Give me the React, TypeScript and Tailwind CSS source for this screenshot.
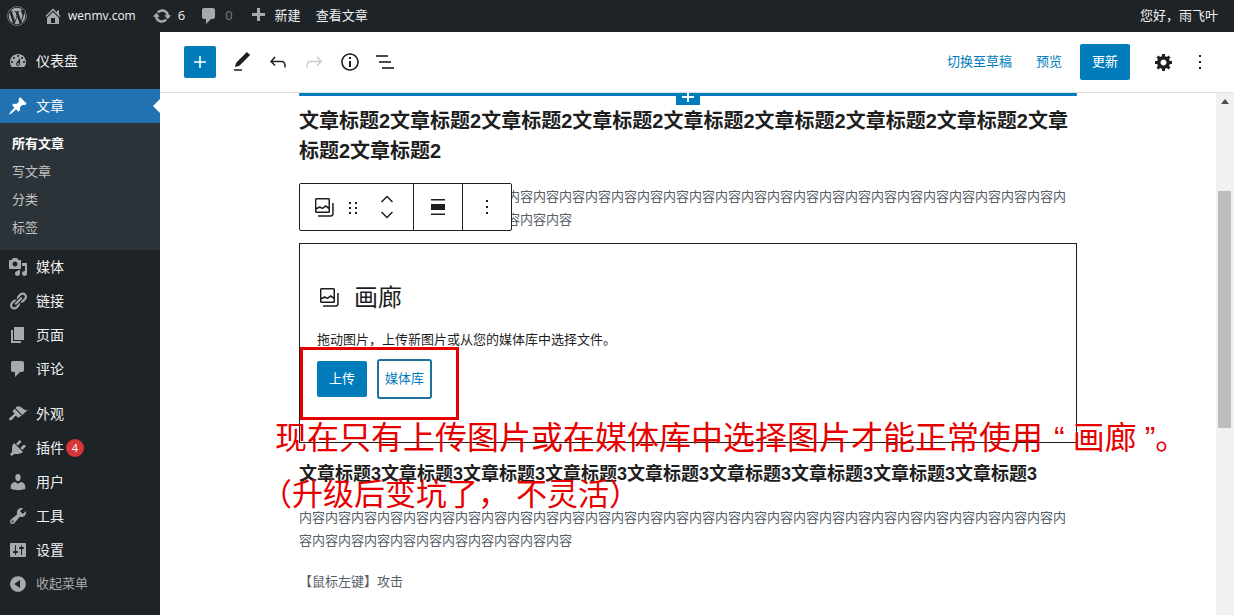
import { FaWordpress } from 'react-icons/fa';

const dash: Record<string, string> = {
  dashboard: 'M3.76 16h12.48c1.1-1.37 1.76-3.11 1.76-5 0-4.42-3.58-8-8-8s-8 3.58-8 8c0 1.89.66 3.63 1.76 5zM10 4c.55 0 1 .45 1 1s-.45 1-1 1-1-.45-1-1 .45-1 1-1zM6 6c.55 0 1 .45 1 1s-.45 1-1 1-1-.45-1-1 .45-1 1-1zm8 0c.55 0 1 .45 1 1s-.45 1-1 1-1-.45-1-1 .45-1 1-1zm-5.37 5.55L12 7v6c0 1.1-.9 2-2 2s-2-.9-2-2c0-.57.24-1.08.63-1.45zM4 10c.55 0 1 .45 1 1s-.45 1-1 1-1-.45-1-1 .45-1 1-1zm12 0c.55 0 1 .45 1 1s-.45 1-1 1-1-.45-1-1 .45-1 1-1zm-5 3c0-.55-.45-1-1-1s-1 .45-1 1 .45 1 1 1 1-.45 1-1z',
  post: 'M10.44 3.02l1.82-1.82 6.36 6.35-1.83 1.82c-1.05-.68-2.48-.57-3.41.36l-.75.75c-.92.93-1.04 2.35-.35 3.41l-1.83 1.82-2.41-2.41-2.8 2.79c-.42.42-3.38 2.71-3.8 2.29s1.86-3.39 2.28-3.81l2.79-2.79L4.1 9.36l1.83-1.82c1.05.69 2.48.57 3.4-.36l.75-.75c.93-.92 1.05-2.35.36-3.41z',
  media: 'M13 11V4c0-.55-.45-1-1-1h-1.67L9 1H5L3.67 3H2c-.55 0-1 .45-1 1v7c0 .55.45 1 1 1h10c.55 0 1-.45 1-1zM7 4.5c1.38 0 2.5 1.12 2.5 2.5S8.38 9.5 7 9.5 4.5 8.38 4.5 7 5.62 4.5 7 4.5zM14 6h5v10.5c0 1.38-1.12 2.5-2.5 2.5S14 17.88 14 16.5s1.12-2.5 2.5-2.5c.17 0 .34.02.5.05V9h-3V6zm-4 8.05V13h2v3.5c0 1.38-1.12 2.5-2.5 2.5S7 17.88 7 16.5 8.12 14 9.5 14c.17 0 .34.02.5.05z',
  links: 'M17.74 2.76c1.68 1.69 1.68 4.41 0 6.1l-1.53 1.52c-1.12 1.12-2.7 1.47-4.14 1.09l2.62-2.61.76-.77.76-.76c.84-.84.84-2.2 0-3.04-.84-.85-2.2-.85-3.04 0l-.77.76-3.38 3.38c-.37-1.44-.02-3.02 1.1-4.14l1.52-1.53c1.69-1.68 4.42-1.68 6.1 0zM8.59 13.43l5.34-5.34c.42-.42.42-1.1 0-1.52-.44-.43-1.13-.39-1.53 0l-5.33 5.34c-.42.42-.42 1.1 0 1.52.44.43 1.13.39 1.52 0zm-.76 2.29l4.14-4.15c.38 1.44.03 3.02-1.09 4.14l-1.52 1.53c-1.69 1.68-4.41 1.68-6.1 0-1.68-1.68-1.68-4.42 0-6.1l1.53-1.52c1.12-1.12 2.7-1.47 4.14-1.1l-4.14 4.15c-.85.84-.85 2.2 0 3.05.84.84 2.2.84 3.04 0z',
  page: 'M6 15V2h10v13H6zm-1 1h8v2H3V5h2v11z',
  comment: 'M5 2h9c1.1 0 2 .9 2 2v7c0 1.1-.9 2-2 2h-2l-5 5v-5H5c-1.1 0-2-.9-2-2V4c0-1.1.9-2 2-2z',
  appearance: 'M14.48 11.06L7.41 3.99l1.5-1.5c.5-.56 2.3-.47 3.51.32 1.21.8 1.43 1.28 2.91 2.1 1.18.64 2.45 1.26 4.45.85zm-.71.71L6.7 4.7 4.93 6.47c-.39.39-.39 1.02 0 1.41l1.06 1.06c.39.39.39 1.03 0 1.42-.6.6-1.43 1.11-2.21 1.69-.35.26-.7.53-1.01.84C1.43 13.23.4 14.96 1.4 15.9c.94 1 2.68-.02 3.03-.37.31-.31.58-.66.85-1.02.57-.78 1.08-1.6 1.69-2.21.39-.39 1.02-.39 1.41 0l1.06 1.06c.39.39 1.02.39 1.41 0z',
  plugins: 'M13.11 4.36L9.87 7.6 8 5.73l3.24-3.24c.35-.34 1.05-.2 1.56.32.52.51.66 1.21.31 1.55zm-8 1.77l.91-1.12 9.01 9.01-1.19.84c-.71.71-2.63 1.16-3.82 1.16H6.14L4.9 17.26c-.59.59-1.54.59-2.12 0-.59-.58-.59-1.53 0-2.12l1.24-1.24v-3.88c0-1.13.4-3.19 1.09-3.89zm7.26 3.97l3.24-3.24c.34-.35 1.04-.21 1.55.31.52.51.66 1.21.31 1.55l-3.24 3.25z',
  users: 'M10 9.25c-2.27 0-2.73-3.44-2.73-3.44C7 4.02 7.82 2 9.97 2c2.16 0 2.98 2.02 2.71 3.81 0 0-.41 3.44-2.68 3.44zm0 2.57L12.72 10c2.39 0 4.52 2.33 4.52 4.53v2.49s-3.65 1.13-7.24 1.13c-3.65 0-7.24-1.13-7.24-1.13v-2.49c0-2.25 1.94-4.48 4.47-4.48z',
  tools: 'M16.68 9.77c-1.34 1.34-3.3 1.67-4.95.99l-5.41 6.52c-.99.99-2.59.99-3.58 0s-.99-2.59 0-3.57l6.52-5.42c-.68-1.65-.35-3.61.99-4.95 1.28-1.28 3.12-1.62 4.72-1.06l-2.89 2.89 2.82 2.82 2.86-2.87c.53 1.58.18 3.39-1.08 4.65zM3.81 16.21c.4.39 1.04.39 1.43 0 .4-.4.4-1.04 0-1.43-.39-.4-1.03-.4-1.43 0-.39.39-.39 1.03 0 1.43z',
  settings: 'M18 16V4c0-.55-.45-1-1-1H3c-.55 0-1 .45-1 1v12c0 .55.45 1 1 1h14c.55 0 1-.45 1-1zM8 11h1c.55 0 1 .45 1 1s-.45 1-1 1H8v1.5c0 .28-.22.5-.5.5s-.5-.22-.5-.5V13H6c-.55 0-1-.45-1-1s.45-1 1-1h1V5.5c0-.28.22-.5.5-.5s.5.22.5.5V11zm5-2h-1c-.55 0-1-.45-1-1s.45-1 1-1h1V5.5c0-.28.22-.5.5-.5s.5.22.5.5V7h1c.55 0 1 .45 1 1s-.45 1-1 1h-1v5.5c0 .28-.22.5-.5.5s-.5-.22-.5-.5V9z',
  collapse: 'M10 2.16c4.33 0 7.84 3.51 7.84 7.84s-3.51 7.84-7.84 7.84S2.16 14.33 2.16 10 5.71 2.16 10 2.16zm2 11.72V6.12L6.18 9.97z',
  update: 'M10.2 3.28c3.53 0 6.43 2.61 6.92 6h2.08l-3.5 4-3.5-4h2.32c-.45-1.97-2.21-3.45-4.32-3.45-1.45 0-2.73.71-3.54 1.78L4.95 5.66C6.23 4.2 8.11 3.28 10.2 3.28zm-.4 13.44c-3.52 0-6.43-2.61-6.92-6H.8l3.5-4c1.17 1.33 2.33 2.67 3.5 4H5.48c.45 1.97 2.21 3.45 4.32 3.45 1.45 0 2.73-.71 3.54-1.78l1.71 1.95c-1.28 1.46-3.15 2.38-5.25 2.38z',
  home: 'M16 8.5l1.53 1.53-1.06 1.06L10 4.62l-6.47 6.47-1.06-1.06L10 2.5l4 4v-2h2v4zm-6-2.46l6 5.99V18H4v-5.97zM12 17v-5H8v5h4z',
  plus: 'M17 7v3h-5v5H9v-5H4V7h5V2h3v5h5z',
  cog: 'M18 12h-2.18c-.17.7-.44 1.35-.81 1.93l1.54 1.54-2.1 2.1-1.54-1.54c-.58.36-1.23.63-1.91.79V19H8v-2.18c-.68-.16-1.33-.43-1.91-.79l-1.54 1.54-2.12-2.12 1.54-1.54c-.36-.58-.63-1.23-.79-1.91H1V9.03h2.17c.16-.7.44-1.35.8-1.94L2.43 5.55l2.1-2.1 1.54 1.54c.58-.37 1.24-.64 1.93-.81V2h3v2.18c.68.16 1.33.43 1.91.79l1.54-1.54 2.12 2.12-1.54 1.54c.36.59.64 1.24.8 1.94H18V12zm-8.5 1.5c1.66 0 3-1.34 3-3s-1.34-3-3-3-3 1.34-3 3 1.34 3 3 3z',
};

const wp: Record<string, string> = {
  add: 'M18 11.2h-5.2V6h-1.6v5.2H6v1.6h5.2V18h1.6v-5.2H18z',
  edit: 'M20.1 5.1L16.9 2 6.2 12.7l-1.3 4.4 4.5-1.3L20.1 5.1zM4 20.8h8v-1.5H4v1.5z',
  undo: 'M18.3 11.7c-.6-.6-1.4-.9-2.3-.9H6.7l2.9-3.3-1.1-1-4.5 5L8.5 16l1-1-2.7-2.7H16c.5 0 .9.2 1.3.5 1 1 1 3.4 1 4.5v.3h1.5v-.2c0-1.5 0-4.3-1.5-5.7z',
  redo: 'M15.6 6.5l-1.1 1 2.9 3.3H8c-.9 0-1.7.3-2.3.9-1.4 1.5-1.4 4.2-1.4 5.6v.2h1.5v-.3c0-1.1 0-3.5 1-4.5.3-.3.7-.5 1.3-.5h9.2L14.5 15l1.1 1.1 4.6-4.6-4.6-5z',
  info: 'M12 3.2c-4.8 0-8.8 3.9-8.8 8.8 0 4.8 3.9 8.8 8.8 8.8 4.8 0 8.8-3.9 8.8-8.8 0-4.8-4-8.8-8.8-8.8zm0 16c-4 0-7.2-3.3-7.2-7.2C4.8 8 8 4.8 12 4.8s7.2 3.3 7.2 7.2c0 4-3.2 7.2-7.2 7.2zM11 17h2v-6h-2v6zm0-8h2V7h-2v2z',
  gallery: 'M20.2 8v11c0 .7-.6 1.2-1.2 1.2H6v1.5h13c1.5 0 2.7-1.2 2.7-2.8V8zM18 16.4V4.6c0-.9-.7-1.6-1.6-1.6H4.6C3.7 3 3 3.7 3 4.6v11.8c0 .9.7 1.6 1.6 1.6h11.8c.9 0 1.6-.7 1.6-1.6zM4.5 4.6c0-.1.1-.1.1-.1h11.8c.1 0 .1.1.1.1V12l-2.3-1.7c-.3-.2-.6-.2-.9 0l-2.9 2.1L8 11.3c-.2-.1-.5-.1-.7 0l-2.9 1.5V4.6zm0 11.8v-1.8l3.2-1.7 2.4 1.2c.2.1.5.1.8-.1l2.8-2 2.8 2v2.4c0 .1-.1.1-.1.1H4.6s-.1 0-.1-.1z',
};

function Dash({ name, className }: { name: string; className?: string }) {
  return (
    <svg viewBox="0 0 20 20" fill="currentColor" className={className}>
      <path d={dash[name]} />
    </svg>
  );
}

function Wp({ name, className }: { name: string; className?: string }) {
  return (
    <svg viewBox="0 0 24 24" fill="currentColor" className={className}>
      <path d={wp[name]} />
    </svg>
  );
}

function MenuItem({ icon, label, badge }: { icon: string; label: string; badge?: string }) {
  return (
    <div className="h-[34px] flex items-center text-[14px] text-[#f0f0f1]">
      <div className="w-9 flex justify-center text-[#a7aaad]">
        <Dash name={icon} className="w-5 h-5" />
      </div>
      <span className="pb-[2px]">{label}</span>
      {badge && (
        <span className="ml-[2px] w-[18px] h-[18px] rounded-full bg-[#d63638] text-white text-[11px] flex items-center justify-center">
          {badge}
        </span>
      )}
    </div>
  );
}

function Sidebar() {
  return (
    <aside className="w-40 shrink-0 bg-[#1d2327] pt-3">
      <MenuItem icon="dashboard" label="仪表盘" />
      <div className="h-[11px]" />
      <div className="relative h-[34px] flex items-center bg-[#2271b1] text-[14px] text-white">
        <div className="w-9 flex justify-center">
          <Dash name="post" className="w-5 h-5" />
        </div>
        <span className="pb-[2px]">文章</span>
        <div className="absolute right-0 top-[10px] border-y-[7px] border-y-transparent border-r-[7px] border-r-white" />
      </div>
      <div className="bg-[#2c3338] pt-[7px] pb-2 text-[13px] text-[#c3c4c7]">
        <div className="h-7 pl-3 flex items-center font-bold text-white">所有文章</div>
        <div className="h-7 pl-3 flex items-center">写文章</div>
        <div className="h-7 pl-3 flex items-center">分类</div>
        <div className="h-7 pl-3 flex items-center">标签</div>
      </div>
      <MenuItem icon="media" label="媒体" />
      <MenuItem icon="links" label="链接" />
      <MenuItem icon="page" label="页面" />
      <MenuItem icon="comment" label="评论" />
      <div className="h-[11px]" />
      <MenuItem icon="appearance" label="外观" />
      <MenuItem icon="plugins" label="插件" badge="4" />
      <MenuItem icon="users" label="用户" />
      <MenuItem icon="tools" label="工具" />
      <MenuItem icon="settings" label="设置" />
      <div className="h-[34px] flex items-center text-[13px] text-[#a7aaad]">
        <div className="w-9 flex justify-center">
          <Dash name="collapse" className="w-5 h-5" />
        </div>
        <span>收起菜单</span>
      </div>
    </aside>
  );
}

function AdminBar() {
  return (
    <header className="h-8 shrink-0 bg-[#1d2327] flex items-center text-[13px] text-[#f0f0f1]">
      <FaWordpress className="ml-[7px] w-5 h-5 text-[#a7aaad]" />
      <Dash name="home" className="ml-4 w-5 h-5 text-[#a7aaad]" />
      <span className="ml-[5px] text-[12px]">wenmv.com</span>
      <Dash name="update" className="ml-4 w-5 h-5 text-[#a7aaad]" />
      <span className="ml-[6px]">6</span>
      <Dash name="comment" className="ml-[14px] w-5 h-5 text-[#a7aaad]" />
      <span className="ml-[6px] text-[#787c82]">0</span>
      <Dash name="plus" className="ml-[15px] w-5 h-5 text-[#a7aaad]" />
      <span className="ml-[7px]">新建</span>
      <span className="ml-[15px]">查看文章</span>
      <span className="ml-auto mr-4">您好，雨飞叶</span>
    </header>
  );
}

function EditorHeader() {
  return (
    <div className="h-[61px] shrink-0 border-b border-[#e0e0e0] bg-white flex items-center text-[13px]">
      <button className="ml-6 w-8 h-8 rounded-[2px] bg-[#007cba] text-white flex items-center justify-center">
        <Wp name="add" className="w-6 h-6" />
      </button>
      <div className="ml-[8px] flex text-[#1e1e1e]">
        <div className="w-9 h-9 flex items-center justify-center"><Wp name="edit" className="w-6 h-6" /></div>
        <div className="w-9 h-9 flex items-center justify-center"><Wp name="undo" className="w-6 h-6" /></div>
        <div className="w-9 h-9 flex items-center justify-center text-[#cccccc]"><Wp name="redo" className="w-6 h-6" /></div>
        <div className="w-9 h-9 flex items-center justify-center"><Wp name="info" className="w-6 h-6" /></div>
        <div className="w-9 h-9 flex items-center justify-center">
          <svg viewBox="0 0 24 24" fill="currentColor" className="w-6 h-6">
            <rect x="2" y="5.2" width="12" height="1.6" />
            <rect x="5" y="11.2" width="12" height="1.6" />
            <rect x="8" y="17.2" width="12" height="1.6" />
          </svg>
        </div>
      </div>
      <span className="ml-auto text-[#007cba]">切换至草稿</span>
      <span className="ml-6 text-[#007cba]">预览</span>
      <button className="ml-[18px] w-[50px] h-9 rounded-[2px] bg-[#007cba] text-white">更新</button>
      <div className="ml-6 w-5 flex justify-center text-[#1e1e1e]">
        <Dash name="cog" className="w-5 h-5" />
      </div>
      <div className="ml-4 mr-6 w-5 flex justify-center text-[#1e1e1e]">
        <svg viewBox="0 0 24 24" fill="currentColor" className="w-6 h-6 shrink-0">
          <path d="M13 19h-2v-2h2v2zm0-6h-2v-2h2v2zm0-6h-2V5h2v2z" />
        </svg>
      </div>
    </div>
  );
}

function BlockToolbar() {
  return (
    <div className="absolute left-0 top-[90px] w-[213px] h-[48px] flex bg-white border border-[#1e1e1e] rounded-[2px] text-[#1e1e1e]">
      <div className="w-[114px] flex items-center border-r border-[#1e1e1e]">
        <Wp name="gallery" className="ml-[12px] w-[24px] h-[24px]" />
        <svg viewBox="0 0 24 24" fill="currentColor" className="ml-[5px] w-6 h-6">
          <path d="M8 7h2v2H8V7zm0 5h2v2H8v-2zm0 5h2v2H8v-2zm6-10h2v2h-2V7zm0 5h2v2h-2v-2zm0 5h2v2h-2v-2z" />
        </svg>
        <div className="ml-[14px] flex flex-col gap-[6px]">
          <svg viewBox="0 0 16 10" fill="none" stroke="currentColor" strokeWidth="1.5" className="w-4 h-[10px]">
            <path d="M2.5 8L8 2.5 13.5 8" />
          </svg>
          <svg viewBox="0 0 16 10" fill="none" stroke="currentColor" strokeWidth="1.5" className="w-4 h-[10px]">
            <path d="M2.5 2L8 7.5 13.5 2" />
          </svg>
        </div>
      </div>
      <div className="w-[49px] flex items-center justify-center border-r border-[#1e1e1e]">
        <svg viewBox="0 0 14 16" fill="currentColor" className="w-[14px] h-4">
          <rect x="0" y="0" width="14" height="1.5" />
          <rect x="0" y="5" width="14" height="6" />
          <rect x="0" y="14.5" width="14" height="1.5" />
        </svg>
      </div>
      <div className="flex-1 flex items-center justify-center">
        <svg viewBox="0 0 24 24" fill="currentColor" className="w-6 h-6">
          <path d="M13 19h-2v-2h2v2zm0-6h-2v-2h2v2zm0-6h-2V5h2v2z" />
        </svg>
      </div>
    </div>
  );
}

function GalleryPlaceholder() {
  return (
    <div className="mt-3 h-[200px] border border-[#1e1e1e] pl-[17px] text-[#1e1e1e]">
      <div className="mt-[35px] h-9 flex items-center">
        <Wp name="gallery" className="w-6 h-6" />
        <span className="ml-[13px] text-[24px]">画廊</span>
      </div>
      <p className="mt-[13px] h-[23px] leading-[23px] text-[13px]">拖动图片，上传新图片或从您的媒体库中选择文件。</p>
      <div className="mt-[8px] flex items-center text-[13px]">
        <button className="w-[50px] h-9 rounded-[2px] bg-[#007cba] text-white">上传</button>
        <button className="ml-[10px] w-[55px] h-10 rounded-[3px] border-2 border-[#1c7299] bg-white text-[#007cba]">媒体库</button>
      </div>
    </div>
  );
}

const neirong = '内容'.repeat(40);

function Editor() {
  return (
    <div className="flex-1 min-h-0 flex">
      <div className="flex-1 min-w-0 overflow-hidden bg-white">
        <div className="relative w-[778px] ml-[139px]">
          <div className="h-[3px] rounded-[1px] bg-[#007cba]" />
          <div className="absolute left-[377px] top-0 w-6 h-3 bg-[#007cba] flex justify-center">
            <div className="relative w-3 h-3">
              <div className="absolute left-[5px] top-0 w-[2px] h-[9px] bg-white" />
              <div className="absolute left-0 top-[3px] w-3 h-[2px] bg-white" />
            </div>
          </div>
          <h2 className="mt-[10px] text-[20px] leading-[30px] font-bold text-[#1e1e1e] font-['Liberation_Sans','Noto_Sans_CJK_SC',sans-serif]">
            {'文章标题2'.repeat(10)}
          </h2>
          <p className="mt-[19px] text-[13px] leading-[23px] text-[#555d66]">{neirong}</p>
          <BlockToolbar />
          <GalleryPlaceholder />
          <h3 className="mt-[18px] text-[18px] leading-[27px] font-bold text-[#1e1e1e] font-['Liberation_Sans','Noto_Sans_CJK_SC',sans-serif]">
            {'文章标题3'.repeat(9)}
          </h3>
          <p className="mt-[18px] text-[13px] leading-[23px] text-[#555d66]">{neirong}</p>
          <p className="mt-[18px] text-[13px] leading-[23px] text-[#555d66]">【鼠标左键】攻击</p>
          <p className="mt-[18px] text-[13px] leading-[23px] text-[#555d66]">【鼠标右键】精确攻击或瞄准</p>
        </div>
      </div>
      <div className="w-[18px] shrink-0 bg-[#f1f1f1] flex flex-col items-center">
        <div className="mt-[6px] border-x-[4px] border-x-transparent border-b-[5px] border-b-[#505050]" />
        <div className="mt-[87px] self-start ml-[2px] w-[13px] h-[237px] bg-[#bdbdbd]" />
      </div>
    </div>
  );
}

export default function App() {
  return (
    <div className="relative h-[615px] overflow-hidden flex flex-col bg-white font-['Open_Sans','Noto_Sans_CJK_SC',sans-serif]">
      <AdminBar />
      <div className="flex-1 min-h-0 flex">
        <Sidebar />
        <main className="flex-1 min-w-0 flex flex-col">
          <EditorHeader />
          <Editor />
        </main>
      </div>

      {/* annotation drawn over the screenshot */}
      <div className="absolute left-[300px] top-[347px] w-[159px] h-[73px] border-[3px] border-[#e60000]" />
      <div className="absolute left-[275px] top-[411px] text-[32px] leading-[48px] text-[#e60000] whitespace-pre font-['Noto_Sans_CJK_SC',sans-serif]">
        现在只有上传图片或在媒体库中选择图片才能正常使用
        <span className="ml-[11px] mr-[8px] font-['Liberation_Sans',sans-serif]">“</span>
        画廊
        <span className="ml-[8px] font-['Liberation_Sans',sans-serif]">”</span>
        。
      </div>
      <div className="absolute left-[261px] top-[468px] text-[31px] leading-[48px] text-[#e60000] whitespace-pre font-['Noto_Sans_CJK_SC',sans-serif]">
        （升级后变坑了， 不灵活）
      </div>
    </div>
  );
}
